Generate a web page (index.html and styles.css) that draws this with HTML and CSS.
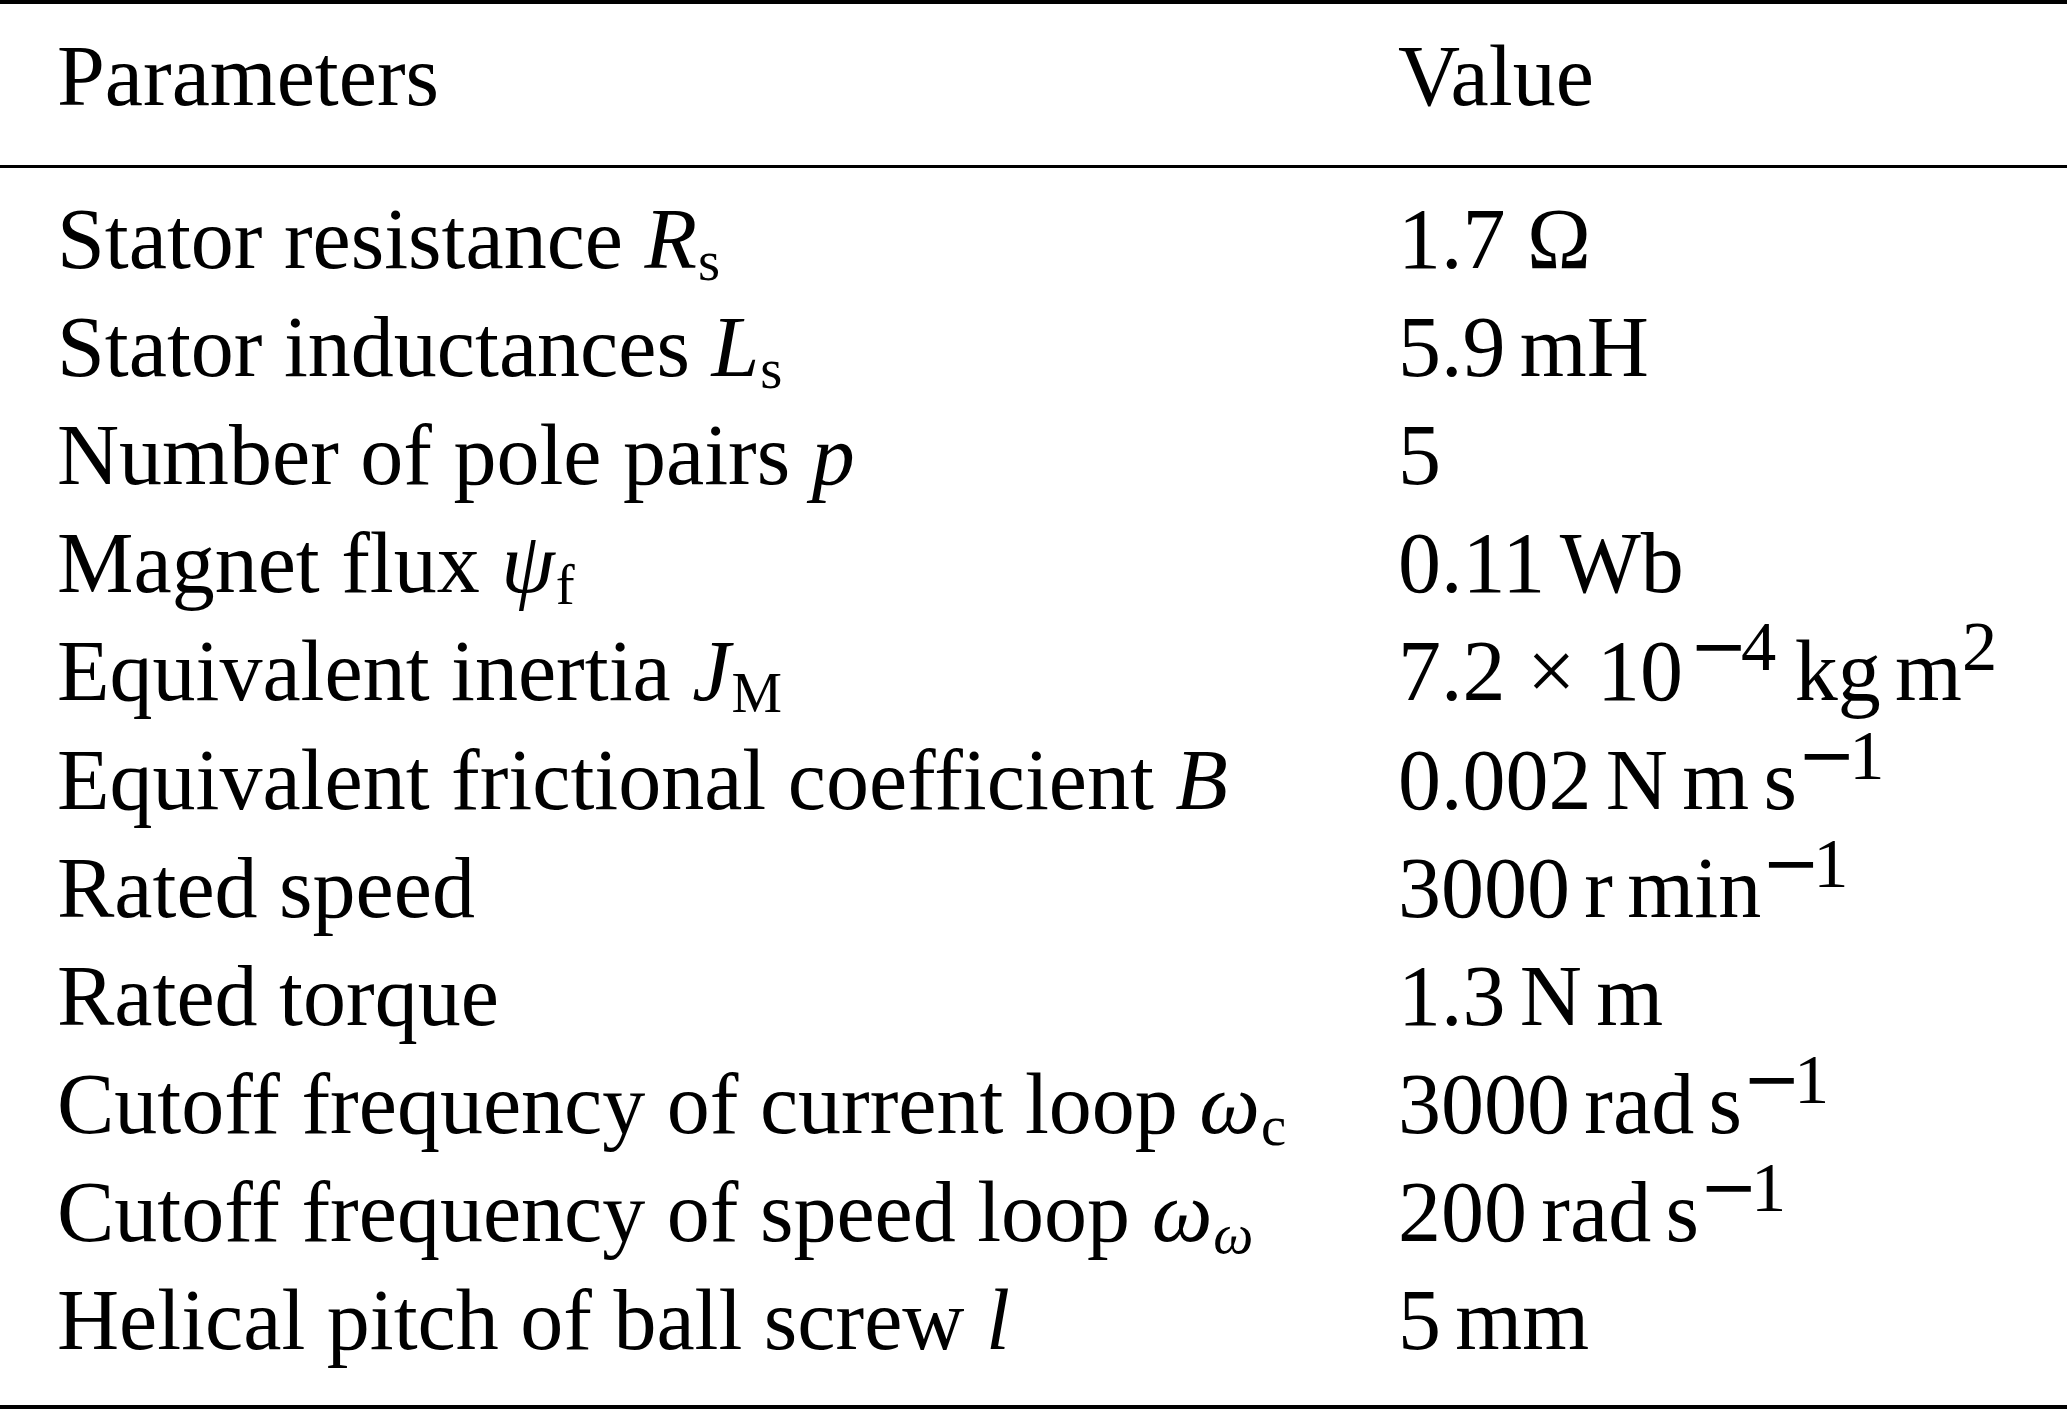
FILE: index.html
```html
<!DOCTYPE html>
<html lang="en">
<head>
<meta charset="utf-8">
<title>Parameters</title>
<link rel="stylesheet" href="styles.css">
</head>
<body>
<div class="table">
  <div class="rule rule-heavy"></div>
  <div class="row head">
    <div class="c1">Parameters</div>
    <div class="c2">Value</div>
  </div>
  <div class="rule rule-light"></div>
  <div class="body">
    <div class="row">
      <div class="c1">Stator resistance <i>R</i><span class="sub">s</span></div>
      <div class="c2">1.7 Ω</div>
    </div>
    <div class="row">
      <div class="c1">Stator inductances <i>L</i><span class="sub">s</span></div>
      <div class="c2">5.9<span class="u">mH</span></div>
    </div>
    <div class="row">
      <div class="c1">Number of pole pairs <i>p</i></div>
      <div class="c2">5</div>
    </div>
    <div class="row">
      <div class="c1">Magnet flux <i>ψ</i><span class="sub">f</span></div>
      <div class="c2">0.11<span class="u">Wb</span></div>
    </div>
    <div class="row">
      <div class="c1">Equivalent inertia <i>J</i><span class="sub">M</span></div>
      <div class="c2">7.2<span class="op">×</span>10<span class="sup exp"><span class="minus">−</span>4</span><span class="u">kg</span><span class="u">m</span><span class="sup">2</span></div>
    </div>
    <div class="row">
      <div class="c1">Equivalent frictional coefficient <i>B</i></div>
      <div class="c2">0.002<span class="u">N</span><span class="u">m</span><span class="u">s</span><span class="sup"><span class="minus">−</span>1</span></div>
    </div>
    <div class="row">
      <div class="c1">Rated speed</div>
      <div class="c2">3000<span class="u">r</span><span class="u">min</span><span class="sup"><span class="minus">−</span>1</span></div>
    </div>
    <div class="row">
      <div class="c1">Rated torque</div>
      <div class="c2">1.3<span class="u">N</span><span class="u">m</span></div>
    </div>
    <div class="row">
      <div class="c1">Cutoff frequency of current loop <i>ω</i><span class="sub">c</span></div>
      <div class="c2">3000<span class="u">rad</span><span class="u">s</span><span class="sup"><span class="minus">−</span>1</span></div>
    </div>
    <div class="row">
      <div class="c1">Cutoff frequency of speed loop <i>ω</i><span class="sub"><i>ω</i></span></div>
      <div class="c2">200<span class="u">rad</span><span class="u">s</span><span class="sup"><span class="minus">−</span>1</span></div>
    </div>
    <div class="row">
      <div class="c1">Helical pitch of ball screw <i>l</i></div>
      <div class="c2">5<span class="u">mm</span></div>
    </div>
  </div>
  <div class="rule rule-heavy"></div>
</div>
</body>
</html>
```

FILE: styles.css
```css
html, body {
  margin: 0;
  padding: 0;
  background: #ffffff;
}

body {
  width: 2067px;
  height: 1411px;
  overflow: hidden;
  font-family: "Liberation Serif", "Times New Roman", serif;
  color: #000000;
}

.table {
  width: 2067px;
  display: flex;
  flex-direction: column;
}

.rule {
  background: #000000;
  width: 100%;
}

.rule-heavy {
  height: 4px;
}

.rule-light {
  height: 3px;
}

.row {
  display: grid;
  grid-template-columns: 1341px 1fr;
  padding-left: 57px;
  font-size: 86px;
  line-height: 108.1px;
  white-space: nowrap;
}

.head {
  padding-top: 18px;
  padding-bottom: 35px;
}

.body {
  padding-top: 17px;
  padding-bottom: 31px;
  display: flex;
  flex-direction: column;
}

i {
  font-style: italic;
}

.sub {
  font-size: 0.66em;
  line-height: 0;
  vertical-align: -12px;
  margin-left: 1px;
}

.sup {
  font-size: 0.82em;
  line-height: 0;
  vertical-align: 30px;
}

.exp {
  margin-left: 6px;
  margin-right: 4px;
}

.minus {
  font-family: "DejaVu Sans", sans-serif;
  letter-spacing: -7px;
}

.u {
  margin-left: 0.167em;
}

.op {
  margin: 0 0.25em;
}
```
